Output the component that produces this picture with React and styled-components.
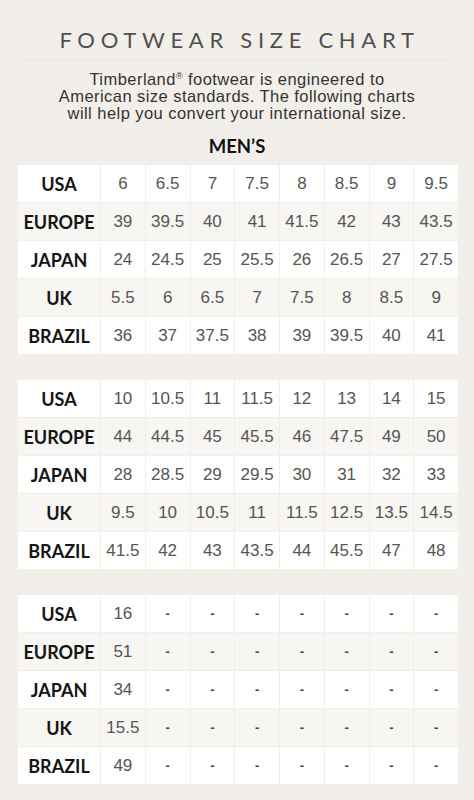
import React from "react";
import styled, { createGlobalStyle } from "styled-components";

const GlobalStyle = createGlobalStyle`
  html, body {
    margin: 0;
    padding: 0;
    background: #f2efea;
  }
`;

const Page = styled.div`
  width: 474px;
  min-height: 800px;
  background: #f2efea;
  display: flex;
  flex-direction: column;
  align-items: center;
`;

const Title = styled.h1`
  margin: 27px 0 0;
  font-family: "Lato", "DejaVu Sans", sans-serif;
  font-weight: 400;
  font-size: 22px;
  line-height: 26px;
  letter-spacing: 5.7px;
  color: #505050;
  padding-left: 5px;
`;

const Divider = styled.div`
  width: 424px;
  height: 1px;
  background: #e9e5df;
  margin-top: 6px;
`;

const Intro = styled.p`
  margin: 11px 0 0;
  font-family: "Liberation Sans", Arial, sans-serif;
  font-size: 16.5px;
  line-height: 17px;
  letter-spacing: 0.45px;
  color: #333;
  text-align: center;
  sup {
    font-size: 9px;
    vertical-align: 6px;
    line-height: 0;
  }
`;

const Section = styled.h2`
  margin: 14px 0 0;
  font-family: "Lato", "DejaVu Sans", sans-serif;
  font-weight: 700;
  font-size: 18.5px;
  line-height: 20px;
  color: #111;
`;

const Tables = styled.div`
  align-self: flex-start;
  display: flex;
  flex-direction: column;
  gap: 26px;
  margin: 9px 0 0 18px;
  width: 440px;
`;

const Grid = styled.div`
  display: grid;
  grid-template-columns: 82px repeat(8, 1fr);
  grid-auto-rows: 37px;
  gap: 1px;
  background: #f2efeb;
`;

const Cell = styled.div`
  display: flex;
  align-items: center;
  justify-content: center;
  background: ${({ $shade }) => ($shade ? "#f8f6f3" : "#ffffff")};
  font-family: ${({ $label }) =>
    $label ? '"Lato", "DejaVu Sans", sans-serif' : '"Liberation Sans", Arial, sans-serif'};
  font-weight: ${({ $label, $dash }) => ($label || $dash ? 700 : 400)};
  font-size: ${({ $label, $dash }) => ($label ? "18px" : $dash ? "13px" : "17px")};
  color: ${({ $label, $dash }) => ($label ? "#151515" : $dash ? "#444" : "#555")};
  white-space: nowrap;
`;

const labels = ["USA", "EUROPE", "JAPAN", "UK", "BRAZIL"];

const charts = [
  [
    ["6", "6.5", "7", "7.5", "8", "8.5", "9", "9.5"],
    ["39", "39.5", "40", "41", "41.5", "42", "43", "43.5"],
    ["24", "24.5", "25", "25.5", "26", "26.5", "27", "27.5"],
    ["5.5", "6", "6.5", "7", "7.5", "8", "8.5", "9"],
    ["36", "37", "37.5", "38", "39", "39.5", "40", "41"],
  ],
  [
    ["10", "10.5", "11", "11.5", "12", "13", "14", "15"],
    ["44", "44.5", "45", "45.5", "46", "47.5", "49", "50"],
    ["28", "28.5", "29", "29.5", "30", "31", "32", "33"],
    ["9.5", "10", "10.5", "11", "11.5", "12.5", "13.5", "14.5"],
    ["41.5", "42", "43", "43.5", "44", "45.5", "47", "48"],
  ],
  [
    ["16", "-", "-", "-", "-", "-", "-", "-"],
    ["51", "-", "-", "-", "-", "-", "-", "-"],
    ["34", "-", "-", "-", "-", "-", "-", "-"],
    ["15.5", "-", "-", "-", "-", "-", "-", "-"],
    ["49", "-", "-", "-", "-", "-", "-", "-"],
  ],
];

const SizeTable = ({ rows }) => (
  <Grid>
    {rows.map((row, r) => (
      <React.Fragment key={r}>
        <Cell $label $shade={r % 2 === 1}>
          {labels[r]}
        </Cell>
        {row.map((v, c) => (
          <Cell key={c} $shade={r % 2 === 1} $dash={v === "-"}>
            {v}
          </Cell>
        ))}
      </React.Fragment>
    ))}
  </Grid>
);

export default function App() {
  return (
    <>
      <GlobalStyle />
      <Page>
        <Title>FOOTWEAR SIZE CHART</Title>
        <Divider />
        <Intro>
          Timberland<sup>®</sup> footwear is engineered to
          <br />
          American size standards. The following charts
          <br />
          will help you convert your international size.
        </Intro>
        <Section>MEN’S</Section>
        <Tables>
          {charts.map((rows, i) => (
            <SizeTable key={i} rows={rows} />
          ))}
        </Tables>
      </Page>
    </>
  );
}
